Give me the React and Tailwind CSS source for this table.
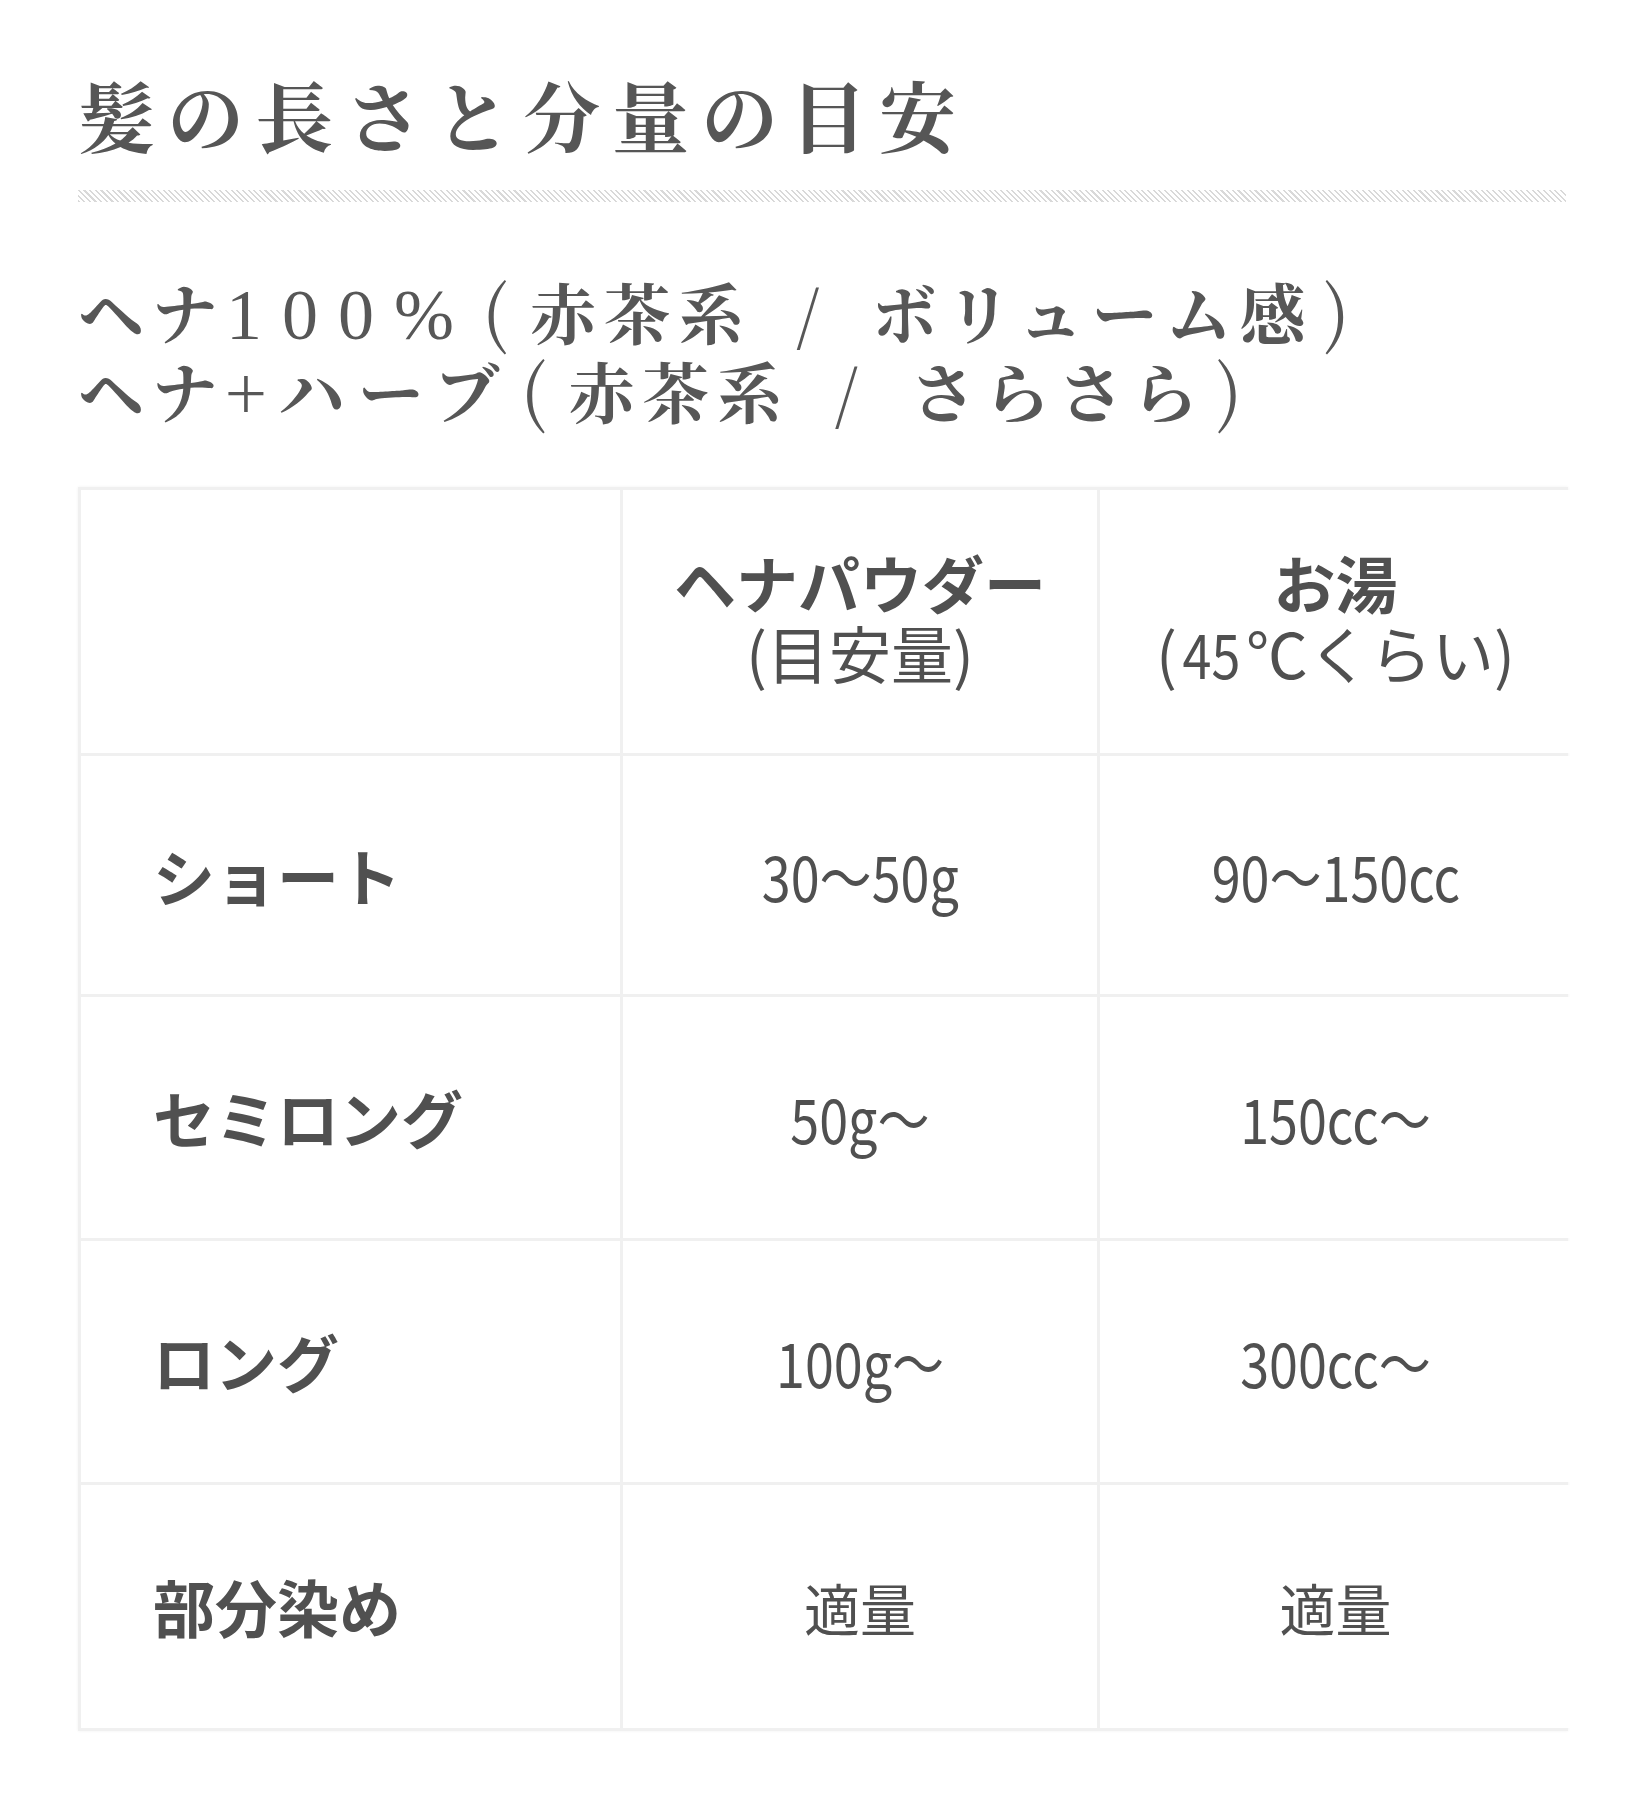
import React from 'react'

const rows = [
  { label: 'ショート', powder: '30〜50g', water: '90〜150cc', h: 'h-[238px]' },
  { label: 'セミロング', powder: '50g〜', water: '150cc〜', h: 'h-[241px]' },
  { label: 'ロング', powder: '100g〜', water: '300cc〜', h: 'h-[241px]' },
  { label: '部分染め', powder: '適量', water: '適量', h: 'h-[243px]', plain: true },
]

function Value({ text, plain }){
  if (plain) return <span className="text-[56px]">{text}</span>
  return <span className="inline-block text-[62px] scale-x-[0.84]">{text}</span>
}

const Open = () => <span className="font-normal text-[72px] leading-[0px] ml-[8px] mr-[14px]">(</span>
const Close = () => <span className="font-normal text-[72px] leading-[0px] ml-[10px]">)</span>
const Slash = () => <span className="font-normal mx-[44px]">/</span>

export default function App(){
  return (
    <div className="bg-white w-[1644px] min-h-[1820px] px-[78px] pt-[64px] text-[#555]">
      <h1 className="text-[77px] leading-[100px] font-bold tracking-[12px] text-[#565656] font-['Noto_Serif_CJK_JP','Liberation_Serif',serif]">髪の長さと分量の目安</h1>
      <div className="mt-[26px] h-[12px] w-full bg-[repeating-linear-gradient(45deg,#d9d9d9_0,#d9d9d9_1.5px,#fff_1.5px,#fff_4px)]" />

      <div className="mt-[69px] text-[66px] leading-[79px] font-bold tracking-[8px] text-[#575757] font-['Noto_Serif_CJK_JP','Liberation_Serif',serif]">
        <div>ヘナ<span className="font-['Liberation_Serif',serif] font-normal text-[72px] leading-[0px] tracking-[20px]">100%</span><Open />赤茶系<Slash />ボリューム感<Close /></div>
        <div>ヘナ<span className="tracking-[13px]">+ハーブ</span><Open />赤茶系<Slash />さらさら<Close /></div>
      </div>

      <div className="mt-[58px] w-[1490px] grid grid-cols-[539px_474px_471px] gap-[3px] p-[3px] bg-[#f0f0f0] shadow-[0_0_3px_rgba(0,0,0,0.06)] font-['Noto_Sans_CJK_JP','Noto_Sans',sans-serif] text-[#505050]">
        <div className="bg-white h-[263px]" />
        <div className="bg-white h-[263px] flex flex-col items-center justify-center pb-[10px] text-[62px] leading-[70px]">
          <div className="font-bold">ヘナパウダー</div>
          <div className="font-normal">(目安量)</div>
        </div>
        <div className="bg-white h-[263px] flex flex-col items-center justify-center pb-[10px] text-[62px] leading-[70px]">
          <div className="font-bold">お湯</div>
          <div className="font-normal">(<span className="inline-block scale-x-[0.84]">45</span>℃くらい)</div>
        </div>
        {rows.map((r, i) => (
          <React.Fragment key={i}>
            <div className={`bg-white ${r.h} flex items-center pl-[72px] text-[62px] font-bold`}>{r.label}</div>
            <div className={`bg-white ${r.h} flex items-center justify-center`}><Value text={r.powder} plain={r.plain} /></div>
            <div className={`bg-white ${r.h} flex items-center justify-center`}><Value text={r.water} plain={r.plain} /></div>
          </React.Fragment>
        ))}
      </div>
    </div>
  )
}
